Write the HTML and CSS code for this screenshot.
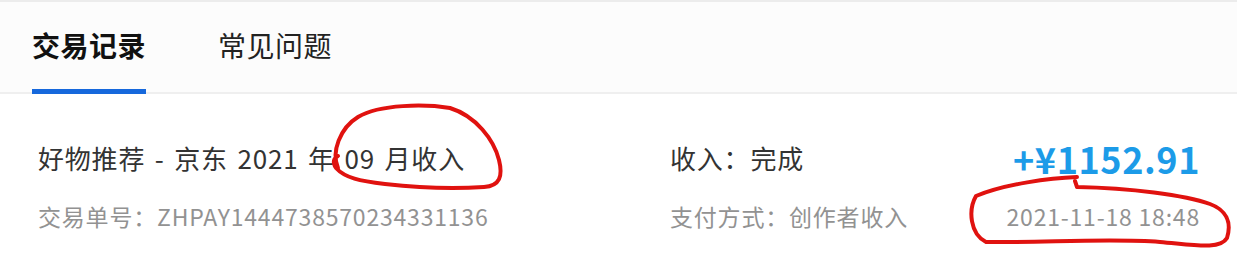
FILE: index.html
```html
<!DOCTYPE html>
<html lang="zh-CN">
<head>
<meta charset="utf-8">
<title>交易记录</title>
<link rel="stylesheet" href="styles.css">
</head>
<body>
<div class="page">
  <div class="tabs">
    <div class="tab active">交易记录</div>
    <div class="tab">常见问题</div>
  </div>
  <div class="record">
    <div class="col">
      <div class="title">好物推荐 - 京东 2021 年 09 月收入</div>
      <div class="sub">交易单号：ZHPAY1444738570234331136</div>
    </div>
    <div class="col">
      <div class="title">收入：完成</div>
      <div class="sub">支付方式：创作者收入</div>
    </div>
    <div class="col right">
      <div class="amount">+¥1152.91</div>
      <div class="sub">2021-11-18 18:48</div>
    </div>
  </div>
  <svg class="marks" width="1237" height="266" viewBox="0 0 1237 266">
    <path d="M338 168 C331 152 340 128 358 117 C380 104 425 104 450 108 C476 116 494 140 499 160 C503 176 500 186 484 187 C455 189 420 188 385 184 C360 181 345 178 336 168 C332 162 334 158 338 156" />
    <path d="M1077 177 C1050 178 1005 184 976 196 C968 210 970 234 986 242 C1040 243 1110 238 1160 242 C1195 245 1220 250 1227 238 C1232 222 1226 210 1210 204 C1185 195 1130 188 1077 187 L1075 181" />
  </svg>
</div>
</body>
</html>
```
FILE: styles.css
```css
html, body {
  margin: 0;
  padding: 0;
  background: #ffffff;
}

.page {
  position: relative;
  width: 1237px;
  height: 266px;
  overflow: hidden;
  font-family: "Noto Sans CJK SC", "Noto Sans", sans-serif;
  color: #333333;
}

.tabs {
  display: flex;
  gap: 72px;
  padding-left: 32px;
  border-top: 2px solid #ececec;
  border-bottom: 2px solid #efefef;
  background: #fcfcfc;
  box-sizing: border-box;
  align-items: flex-end;
  height: 94px;
}

.tab {
  font-size: 28px;
  line-height: 28px;
  padding-top: 32px;
  height: 58px;
  color: #222222;
  letter-spacing: 0.5px;
  margin-bottom: -2px;
  border-bottom: 5px solid transparent;
}

.tab.active {
  font-weight: 700;
  color: #111111;
  border-bottom-color: #1668dc;
}

.record {
  display: grid;
  grid-template-columns: 632px 1fr auto;
  padding: 46px 37px 0 38px;
}

.col {
  display: flex;
  flex-direction: column;
}

.col.right {
  align-items: flex-end;
}

.title {
  font-size: 26px;
  line-height: 36px;
  letter-spacing: 0.8px;
  word-spacing: 3px;
  color: #333333;
}

.sub {
  font-size: 23px;
  line-height: 32px;
  letter-spacing: 0.8px;
  color: #929292;
  margin-top: 24px;
}

.amount {
  font-size: 36px;
  line-height: 36px;
  font-weight: 700;
  color: #1c9be8;
  letter-spacing: 0.6px;
}

.marks {
  position: absolute;
  left: 0;
  top: 0;
  pointer-events: none;
}

.marks path {
  fill: none;
  stroke: #e0120f;
  stroke-width: 4;
  stroke-linecap: round;
  stroke-linejoin: round;
}
```
